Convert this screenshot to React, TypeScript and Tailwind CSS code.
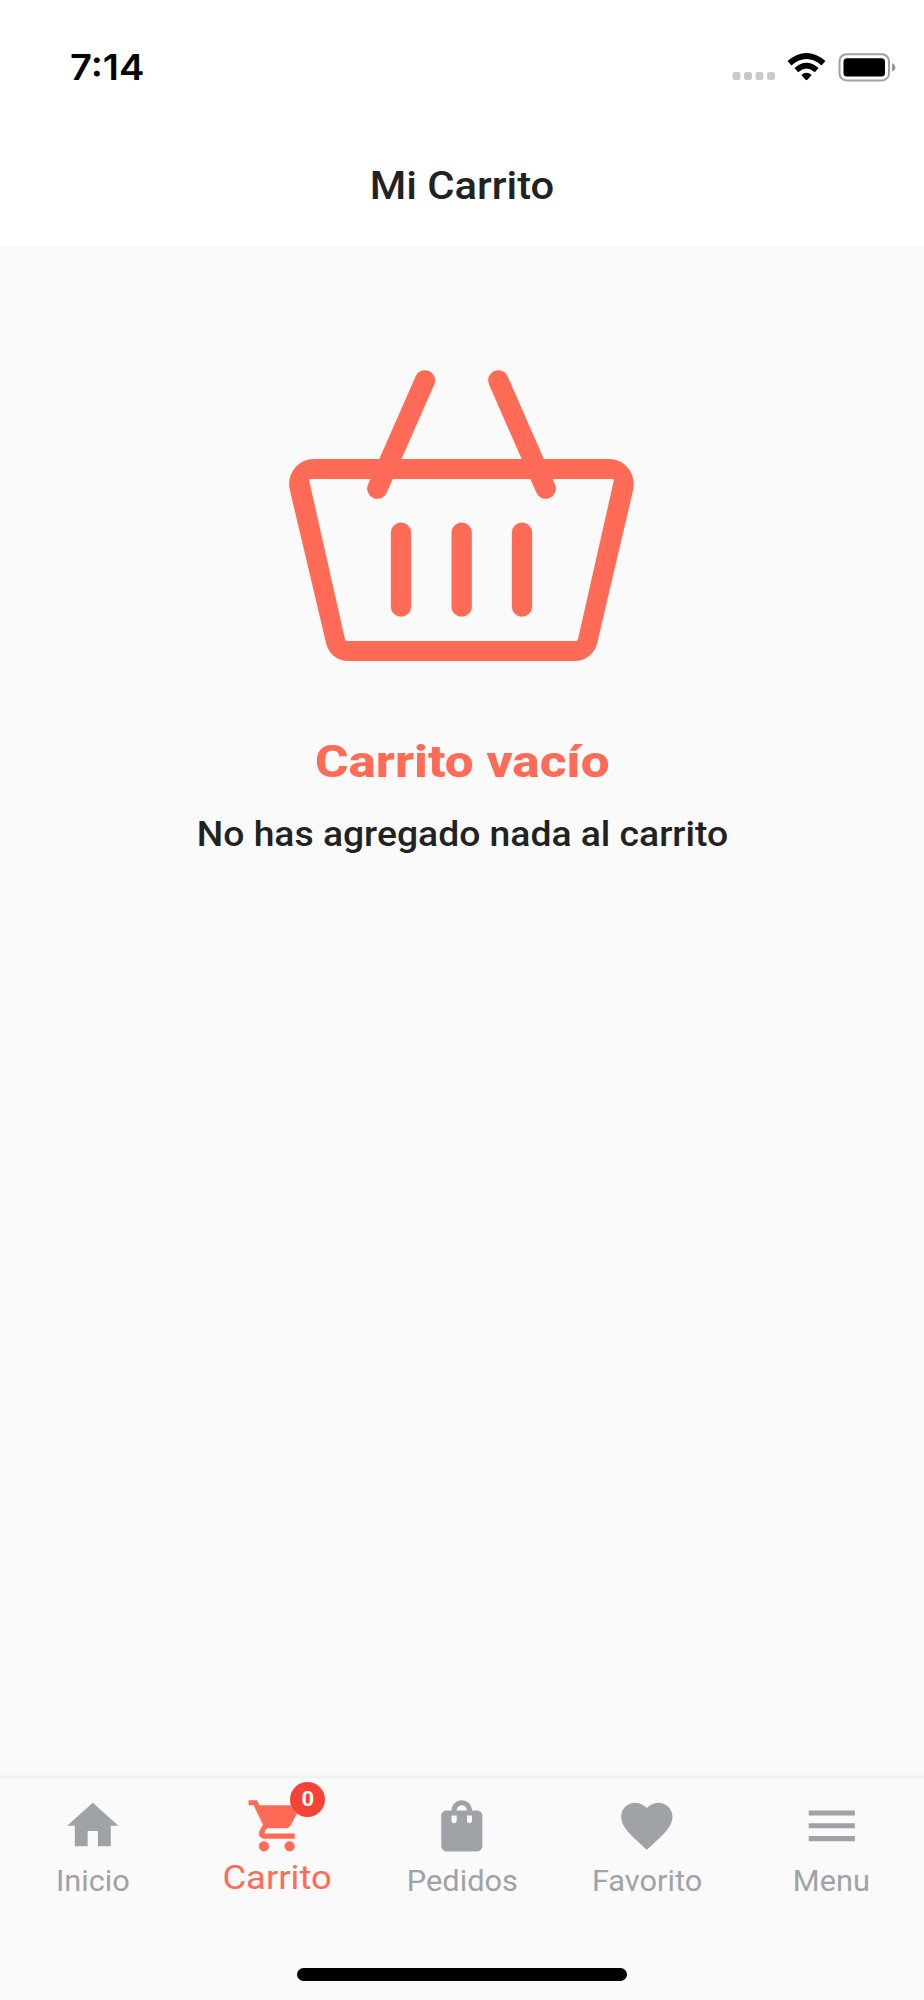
import { MdFavorite, MdHome, MdMenu, MdShoppingCart } from "react-icons/md";

function StatusBar() {
  return (
    <div className="flex h-[134px] items-center justify-between pl-[70px] pr-[28px]">
      <span className="origin-left scale-x-[1.06] font-['Inter'] text-[36px] font-semibold leading-none text-black">7:14</span>
      <svg width="164" height="30" viewBox="0 0 164 30">
        <g fill="#c9c9c9">
          <rect x="0.5" y="20" width="8" height="8" rx="2.5" />
          <rect x="12" y="20" width="8" height="8" rx="2.5" />
          <rect x="23.5" y="20" width="8" height="8" rx="2.5" />
          <rect x="35" y="20" width="8" height="8" rx="2.5" />
        </g>
        <g fill="none" stroke="#000">
          <path d="M57.5 11.2Q74.5 -3.2 91.5 11.2" strokeWidth="6" />
          <path d="M64.3 18.1Q74.5 9.3 84.7 18.1" strokeWidth="5.6" />
        </g>
        <path d="M69.3 23.1Q74.5 18.2 79.7 23.1L75.4 27.8Q74.5 28.7 73.6 27.8Z" />
        <rect x="107.5" y="2.2" width="49.5" height="26.2" rx="7" fill="none" stroke="#a2a2a2" strokeWidth="2" />
        <rect x="111.5" y="6.2" width="41.5" height="18.2" rx="3.5" />
        <path d="M160 11.2q3.4 1.2 3.4 4.2t-3.4 4.2z" fill="#999" />
      </svg>
    </div>
  );
}

function Basket() {
  return (
    <svg className="mr-[1px]" width="345" height="291" viewBox="0 0 1035 873" fill="none" stroke="#ff6b57" strokeWidth="61" strokeLinecap="round">
      <path
        fill="#ff6b57"
        stroke="none"
        fillRule="evenodd"
        d="M75 267H960C1008 267 1042 311 1033 358L925 818C917 851 890 873 857 873H178C145 873 118 851 111 818L2 358C-7 311 27 267 75 267ZM66 327C62 327 60 330 61 334L168 808C169 811 171 813 174 813H861C864 813 866 811 867 808L974 334C975 330 973 327 969 327Z"
      />
      <path d="M408 31L265 356M628 31L770 356M336 488V710M518 488V710M699 488V710" />
    </svg>
  );
}

function BagIcon() {
  return (
    <svg width="61.6" height="61.6" viewBox="0 0 24 24" fill="currentColor">
      <path d="M18 6h-2c0-2.21-1.79-4-4-4S8 3.79 8 6H6c-1.1 0-2 .9-2 2v12c0 1.1.9 2 2 2h12c1.1 0 2-.9 2-2V8c0-1.1-.9-2-2-2zm-8 4c0 .55-.45 1-1 1s-1-.45-1-1V8h2v2zm2-6c1.1 0 2 .9 2 2h-4c0-1.1.9-2 2-2zm4 6c0 .55-.45 1-1 1s-1-.45-1-1V8h2v2z" />
    </svg>
  );
}

const tabs = [
  { label: "Inicio", icon: <MdHome size={61.6} /> },
  { label: "Carrito", icon: <MdShoppingCart size={61.6} />, active: true, badge: 0 },
  { label: "Pedidos", icon: <BagIcon /> },
  { label: "Favorito", icon: <MdFavorite size={61.6} /> },
  { label: "Menu", icon: <MdMenu size={61.6} /> },
];

export default function App() {
  return (
    <div className="flex h-[2000px] w-[924px] flex-col bg-[#fafafa] font-['Roboto',sans-serif] text-[#222]">
      <header className="h-[246px] bg-white">
        <StatusBar />
        <h1 className="scale-x-[1.07] pt-[26px] text-center text-[39px] font-medium leading-[52px]">Mi Carrito</h1>
      </header>

      <main className="flex flex-1 flex-col items-center pt-[124px]">
        <Basket />
        <h2 className="mt-[71px] scale-x-[1.14] text-[45px] font-extrabold leading-[60px] text-[#ff6b57]">Carrito vacío</h2>
        <p className="mt-[20px] scale-x-[1.065] text-[35px] font-medium leading-[46px]">No has agregado nada al carrito</p>
      </main>

      <div className="h-[4px] bg-linear-to-b from-[#fafafa] to-[#eeeeee]" />
      <nav className="grid h-[222px] grid-cols-5 grid-rows-[190px_32px]">
        {tabs.map((tab) => (
          <div key={tab.label} className={`flex flex-col items-center pt-[17px] ${tab.active ? "text-[#ff6b57]" : "text-[#9fa2a7]"}`}>
            <div className="relative">
              {tab.icon}
              {tab.badge !== undefined && (
                <span className="absolute left-[44px] top-[-13.5px] flex size-[35px] items-center justify-center rounded-full bg-[#f44336] text-[20px] font-bold leading-none text-white">
                  <span className="scale-x-[1.1]">{tab.badge}</span>
                </span>
              )}
            </div>
            <span className={`leading-[40px] ${tab.active ? "scale-x-[1.07] text-[34px]" : "mt-[4px] scale-x-[1.06] text-[29px]"}`}>
              {tab.label}
            </span>
          </div>
        ))}
        <div className="col-span-5 mx-auto h-[13px] w-[330px] rounded-full bg-black" />
      </nav>
    </div>
  );
}
